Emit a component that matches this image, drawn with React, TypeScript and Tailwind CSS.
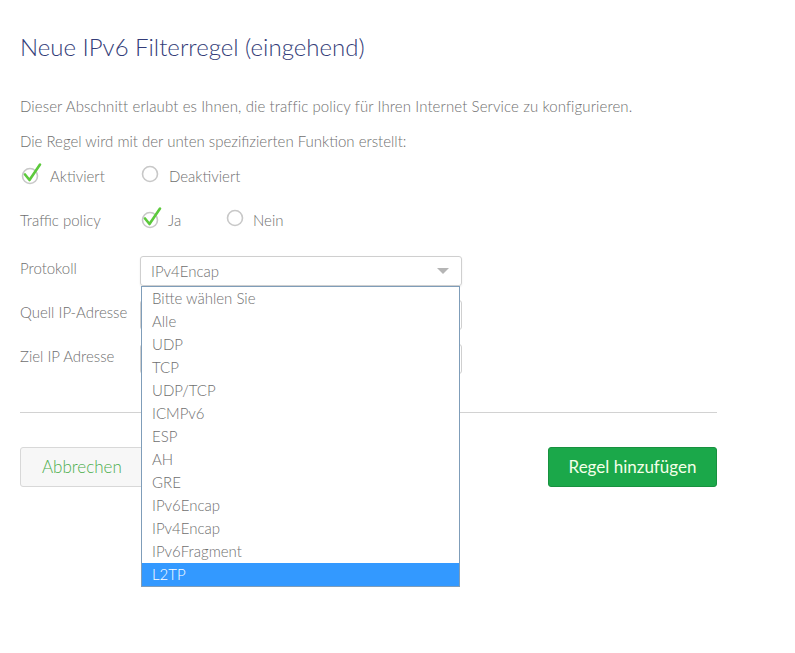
import React from "react";

const font = { fontFamily: "Lato, 'Open Sans', sans-serif" };

function CheckedRadio() {
  return (
    <svg width="24" height="24" viewBox="0 0 24 24" className="shrink-0">
      <circle cx="10" cy="14" r="7.5" fill="none" stroke="#c8c8c8" strokeWidth="1.6" />
      <path d="M5 12.5 L9.5 18 L20 2.5" fill="none" stroke="#5cc93c" strokeWidth="2.6" strokeLinecap="round" strokeLinejoin="round" />
    </svg>
  );
}

function EmptyRadio() {
  return (
    <svg width="20" height="20" viewBox="0 0 20 20" className="shrink-0">
      <circle cx="10" cy="10" r="7.5" fill="none" stroke="#c8c8c8" strokeWidth="1.6" />
    </svg>
  );
}

const options = [
  "Bitte wählen Sie",
  "Alle",
  "UDP",
  "TCP",
  "UDP/TCP",
  "ICMPv6",
  "ESP",
  "AH",
  "GRE",
  "IPv6Encap",
  "IPv4Encap",
  "IPv6Fragment",
  "L2TP",
];

export default function App() {
  return (
    <div className="w-[795px] h-[653px] bg-white text-[#6f6f6f] font-light" style={font}>
      <div className="pl-5 pt-[32px] w-[717px]">
        <h1 className="text-[24px] leading-[30px] text-[#333c78] font-light">Neue IPv6 Filterregel (eingehend)</h1>
        <p className="mt-[34px] text-[15px] leading-[20px] tracking-[0.1px]">
          Dieser Abschnitt erlaubt es Ihnen, die traffic policy für Ihren Internet Service zu konfigurieren.
        </p>
        <p className="mt-[15px] text-[15px] leading-[20px]">Die Regel wird mit der unten spezifizierten Funktion erstellt:</p>

        <div className="mt-[11px] flex items-center h-[24px] text-[15px]">
          <div className="flex items-end w-[120px]">
            <CheckedRadio />
            <span className="ml-[6px] leading-[20px]">Aktiviert</span>
          </div>
          <div className="flex items-center">
            <EmptyRadio />
            <span className="ml-[9px] leading-[20px] mt-[4px]">Deaktiviert</span>
          </div>
        </div>

        <div className="mt-[20px] flex items-center h-[24px] text-[15px]">
          <span className="w-[120px] mt-[4px]">Traffic policy</span>
          <div className="flex items-end w-[85px]">
            <CheckedRadio />
            <span className="ml-[4px] leading-[20px]">Ja</span>
          </div>
          <div className="flex items-center">
            <EmptyRadio />
            <span className="ml-[8px] leading-[20px] mt-[4px]">Nein</span>
          </div>
        </div>

        <div className="mt-[26px] flex flex-col gap-[14px] text-[15px]">
          <div className="flex items-center h-[30px]">
            <span className="w-[120px] -mt-[6px]">Protokoll</span>
            <div className="relative">
              <div className="w-[322px] h-[30px] border border-[#cfcfcf] rounded-[3px] flex items-center pl-[10px] pr-[12px] shadow-[0_1px_2px_rgba(0,0,0,0.08)]">
                <span className="flex-1">IPv4Encap</span>
                <svg width="12" height="7" viewBox="0 0 12 7">
                  <path d="M0 0 L12 0 L6 6 Z" fill="#b5b5b5" />
                </svg>
              </div>
              <ul className="absolute left-[1px] top-[30px] w-[319px] border border-[#7f9db9] bg-white z-10 text-[15px]">
                {options.map((o) => (
                  <li
                    key={o}
                    className={
                      o === "L2TP"
                        ? "h-[23px] leading-[23px] pl-[10px] bg-[#3399ff] text-white"
                        : "h-[23px] leading-[23px] pl-[10px]"
                    }
                  >
                    {o}
                  </li>
                ))}
              </ul>
            </div>
          </div>
          <div className="flex items-center h-[30px]">
            <span className="w-[120px] -mt-[6px]">Quell IP-Adresse</span>
            <div className="w-[322px] h-[30px] border border-[#cfcfcf] rounded-[3px]" />
          </div>
          <div className="flex items-center h-[30px]">
            <span className="w-[120px] -mt-[6px]">Ziel IP Adresse</span>
            <div className="w-[322px] h-[30px] border border-[#cfcfcf] rounded-[3px]" />
          </div>
        </div>

        <div className="mt-[38px] h-px bg-[#d2d2d2]" />

        <div className="mt-[34px] flex justify-between">
          <button className="w-[168px] h-[40px] rounded-[3px] border border-[#d8d8d8] bg-[#f7f7f7] text-[#4cae4c] text-[17px] font-light text-left pl-[21px]">
            Abbrechen
          </button>
          <button className="w-[169px] h-[40px] rounded-[3px] border border-[#18913f] bg-[#1ba84a] text-[#f4ffe8] text-[17px] font-normal">
            Regel hinzufügen
          </button>
        </div>
      </div>
    </div>
  );
}
